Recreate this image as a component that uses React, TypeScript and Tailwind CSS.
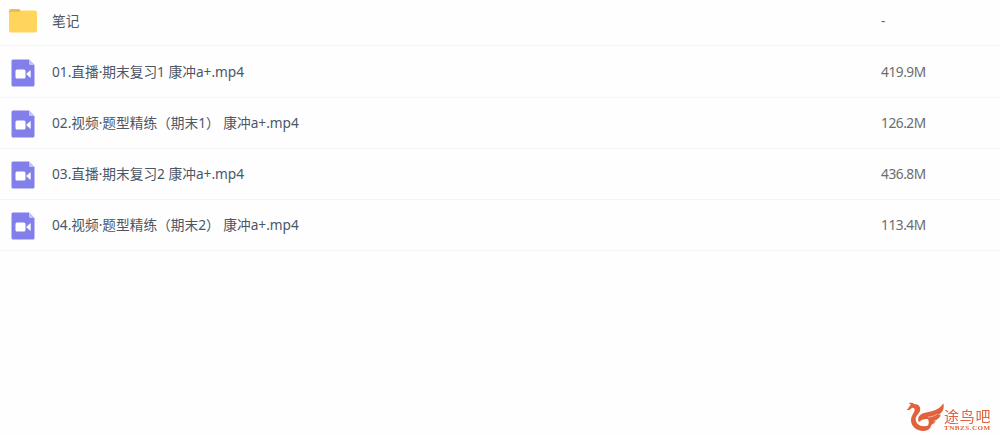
const files = [
  { name: '笔记', size: '-', folder: true },
  { name: '01.直播·期末复习1 康冲a+.mp4', size: '419.9M' },
  { name: '02.视频·题型精练（期末1） 康冲a+.mp4', size: '126.2M' },
  { name: '03.直播·期末复习2 康冲a+.mp4', size: '436.8M' },
  { name: '04.视频·题型精练（期末2） 康冲a+.mp4', size: '113.4M' },
]

function FolderIcon() {
  return (
    <svg width="30" height="26" viewBox="0 0 30 26">
      <path d="M1 3a2 2 0 0 1 2-2h7.5q1 0 1.6.8L14 5v5H1z" fill="#e9bd52" />
      <path d="M1 5.5q0-1.5 1.500-1.500H11q1 0 1.700-.7.600-.8 1.800-.8H27a2 2 0 0 1 2 2V22.500a2 2 0 0 1-2 2H3a2 2 0 0 1-2-2z" fill="#ffd55c" />
    </svg>
  )
}

function VideoIcon() {
  return (
    <svg width="24" height="28" viewBox="0 0 24 28">
      <path d="M2 .5h16L23.500 6V26a1.500 1.500 0 0 1-1.500 1.500H2A1.500 1.500 0 0 1 .5 26V2A1.500 1.500 0 0 1 2 .5z" fill="#827fea" />
      <path d="M18 .5 23.500 6H19.500a1.500 1.500 0 0 1-1.500-1.500z" fill="#c5c3f7" />
      <rect x="4.500" y="10.500" width="10" height="9" rx="1.500" fill="#fff" />
      <path d="M15.500 15 19.300 11.500v7z" fill="#fff" stroke="#fff" strokeWidth=".6" strokeLinejoin="round" />
    </svg>
  )
}

function Logo() {
  return (
    <div className="fixed right-[8px] bottom-[3px] flex text-[#e0633b]">
      <svg width="38" height="30" viewBox="0 0 114 90">
        <path d="M1 23C8 21 8 14 14 9c-1-3-3-4-6-6 8-2 13-1 17 3 14 0 20 10 17 21-3 9-13 14-13 25 0 12 11 21 24 21 11 0 20-5 24-13 1 16-9 27-24 27C29 87 14 70 15 53c1-13 10-20 11-29 0-8-7-9-11-4-3 4-7 5-14 3z" fill="currentColor" />
        <path d="M38 61C32 42 45 33 67 30 88 27 103 19 112 4c4 16-2 28-16 35 3 0 6 0 9-2-4 12-12 18-23 20 3 1 5 1 8 0-6 9-14 13-24 13 3-6 3-13 0-19-11-1-21 2-28 10z" fill="currentColor" />
        <path d="M66 45c9 0 20-3 28-9" fill="none" stroke="#fefefe" strokeWidth="1.500" />
      </svg>
      <div className="w-[48px]">
        <div className="mt-[6px] font-['Noto_Sans_CJK_SC',sans-serif] text-[15px] leading-[15px] tracking-[0.8px] whitespace-nowrap">途鸟吧</div>
        <div className="mt-[2px] font-['Liberation_Serif',serif] text-[7px] leading-[7px] font-bold tracking-[0.55px] whitespace-nowrap">TNBZS.COM</div>
      </div>
    </div>
  )
}

export default function App() {
  return (
    <div className="h-[435px] overflow-hidden bg-[#fefefe] font-['Noto_Sans','Noto_Sans_CJK_SC',sans-serif] text-[13.7px]">
      {files.map(file => (
        <div key={file.name} className="flex h-[51px] items-center border-b border-[#f5f5f6] pt-px first:h-[46px] first:pt-0 first:pb-[3px] nth-2:h-[52px]">
          <div className="flex w-[52px] pl-[8px]">
            {file.folder ? <FolderIcon /> : <div className="pt-px pl-[3px]"><VideoIcon /></div>}
          </div>
          <div className="w-[829px] whitespace-pre text-[#4b5768]">{file.name}</div>
          <div className="tracking-[-0.45px] text-[#6c6c6c]">{file.size}</div>
        </div>
      ))}
      <Logo />
    </div>
  )
}
